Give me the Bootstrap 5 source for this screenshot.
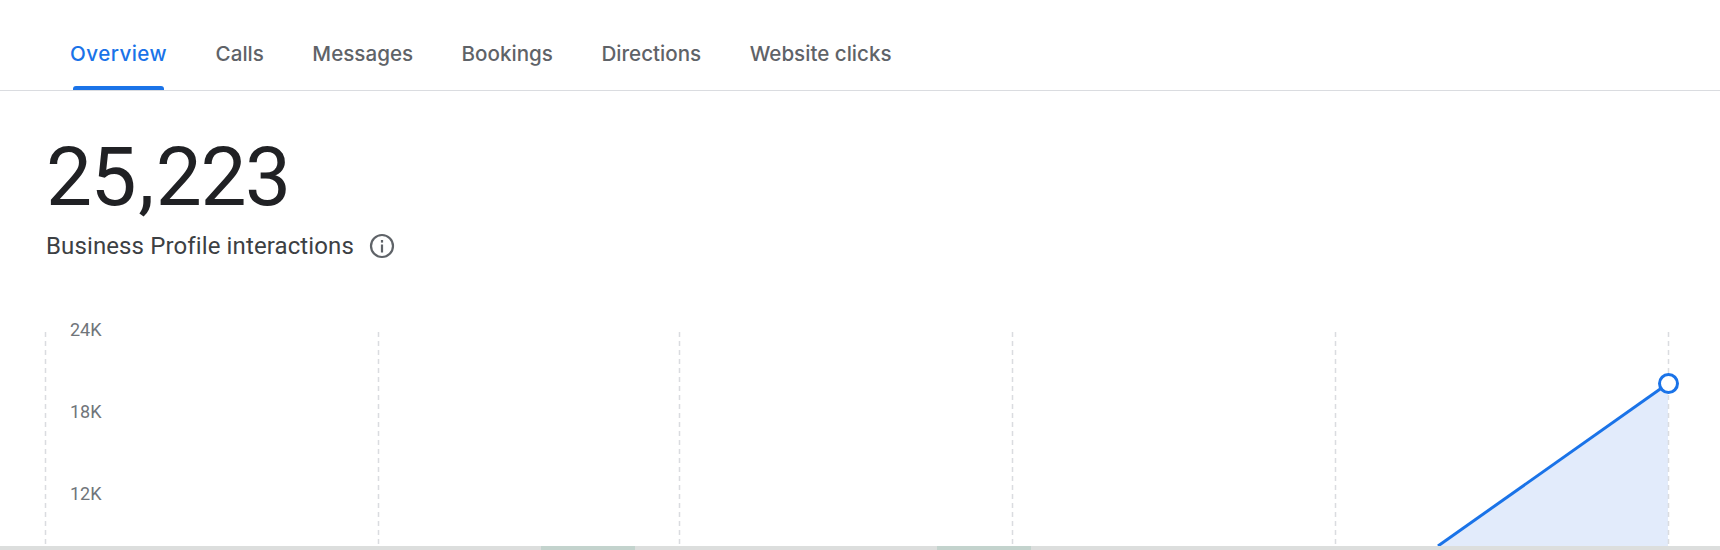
<!DOCTYPE html>
<html lang="en">
<head>
    <meta charset="UTF-8">
    <title>Business Profile performance</title>
    <link href="https://cdn.jsdelivr.net/npm/bootstrap@5.3.0/dist/css/bootstrap.min.css" rel="stylesheet">
    <style>
        html, body {
            height: 550px;
            overflow: hidden;
            background: #fff;
        }
        body {
            font-family: "Roboto", "Liberation Sans", sans-serif;
            color: #202124;
        }
        .tab-bar {
            height: 91px;
            padding-left: 70px;
            gap: 48.5px;
            border-bottom: 1px solid #dadce0;
        }
        .tab-bar .nav-link {
            position: relative;
            height: 90px;
            padding: 39px 0 0;
            font-family: "Inter", "Roboto", sans-serif;
            font-size: 20.6px;
            line-height: 30px;
            font-weight: 500;
            color: #5f6368;
        }
        .tab-bar .nav-link.active {
            color: #1a73e8;
            letter-spacing: 0.45px;
        }
        .tab-bar .nav-link.active::after {
            content: "";
            position: absolute;
            left: 3px;
            right: 3px;
            bottom: 0;
            height: 4px;
            background: #1a73e8;
            border-radius: 3px 3px 0 0;
        }
        .summary {
            padding: 38px 0 0 46px;
        }
        .total-num {
            font-size: 82px;
            line-height: 96px;
            font-weight: 400;
            letter-spacing: -1.5px;
        }
        .num-comma {
            margin: 0 3px;
        }
        .total-label {
            margin-top: 5px;
            gap: 15px;
            font-size: 24px;
            line-height: 32px;
            letter-spacing: 0.12px;
            color: #3c4043;
        }
        .chart-wrap {
            height: 226px;
            margin-top: 58px;
        }
        .chart-wrap svg {
            display: block;
        }
        .axis-text {
            font-family: "Roboto", sans-serif;
            font-size: 18px;
            fill: #70757a;
        }
        .bottom-strip {
            height: 4px;
            background: #dcdedd;
        }
        .strip-green {
            width: 94px;
            margin-left: 302px;
            background: #c3d3cd;
        }
        .strip-green:first-child {
            margin-left: 541px;
        }
    </style>
</head>
<body>
    <ul class="nav tab-bar">
        <li class="nav-item"><a class="nav-link active" href="#">Overview</a></li>
        <li class="nav-item"><a class="nav-link" href="#">Calls</a></li>
        <li class="nav-item"><a class="nav-link" href="#">Messages</a></li>
        <li class="nav-item"><a class="nav-link" href="#">Bookings</a></li>
        <li class="nav-item"><a class="nav-link" href="#">Directions</a></li>
        <li class="nav-item"><a class="nav-link" href="#">Website clicks</a></li>
    </ul>

    <div class="summary">
        <div class="total-num">25<span class="num-comma">,</span>223</div>
        <div class="total-label d-flex align-items-center">
            <span>Business Profile interactions</span>
            <svg width="26" height="26" viewBox="0 0 26 26" fill="none">
                <circle cx="13" cy="13" r="11" stroke="#5f6368" stroke-width="2.2"/>
                <rect x="11.9" y="11.5" width="2.2" height="8" fill="#5f6368"/>
                <rect x="11.9" y="7" width="2.2" height="2.6" fill="#5f6368"/>
            </svg>
        </div>
    </div>

    <div class="chart-wrap">
        <svg width="1720" height="226" viewBox="0 320 1720 226">
            <polygon points="1438,546 1668,383.5 1668,546" fill="#e2ebfb"/>
            <g stroke="#dadce0" stroke-width="1.5" stroke-dasharray="5 4">
                <line x1="45.5" y1="332" x2="45.5" y2="546"/>
                <line x1="378.5" y1="332" x2="378.5" y2="546"/>
                <line x1="679.5" y1="332" x2="679.5" y2="546"/>
                <line x1="1012.5" y1="332" x2="1012.5" y2="546"/>
                <line x1="1335.5" y1="332" x2="1335.5" y2="546"/>
                <line x1="1668.5" y1="332" x2="1668.5" y2="546"/>
            </g>
            <text class="axis-text" x="70" y="336">24K</text>
            <text class="axis-text" x="70" y="417.5">18K</text>
            <text class="axis-text" x="70" y="500">12K</text>
            <line x1="1438" y1="546" x2="1668" y2="383.5" stroke="#1a73e8" stroke-width="3"/>
            <circle cx="1668.5" cy="383.5" r="9" fill="#fff" stroke="#1a73e8" stroke-width="3"/>
        </svg>
    </div>

    <div class="bottom-strip d-flex">
        <div class="strip-green"></div>
        <div class="strip-green"></div>
    </div>
</body>
</html>
